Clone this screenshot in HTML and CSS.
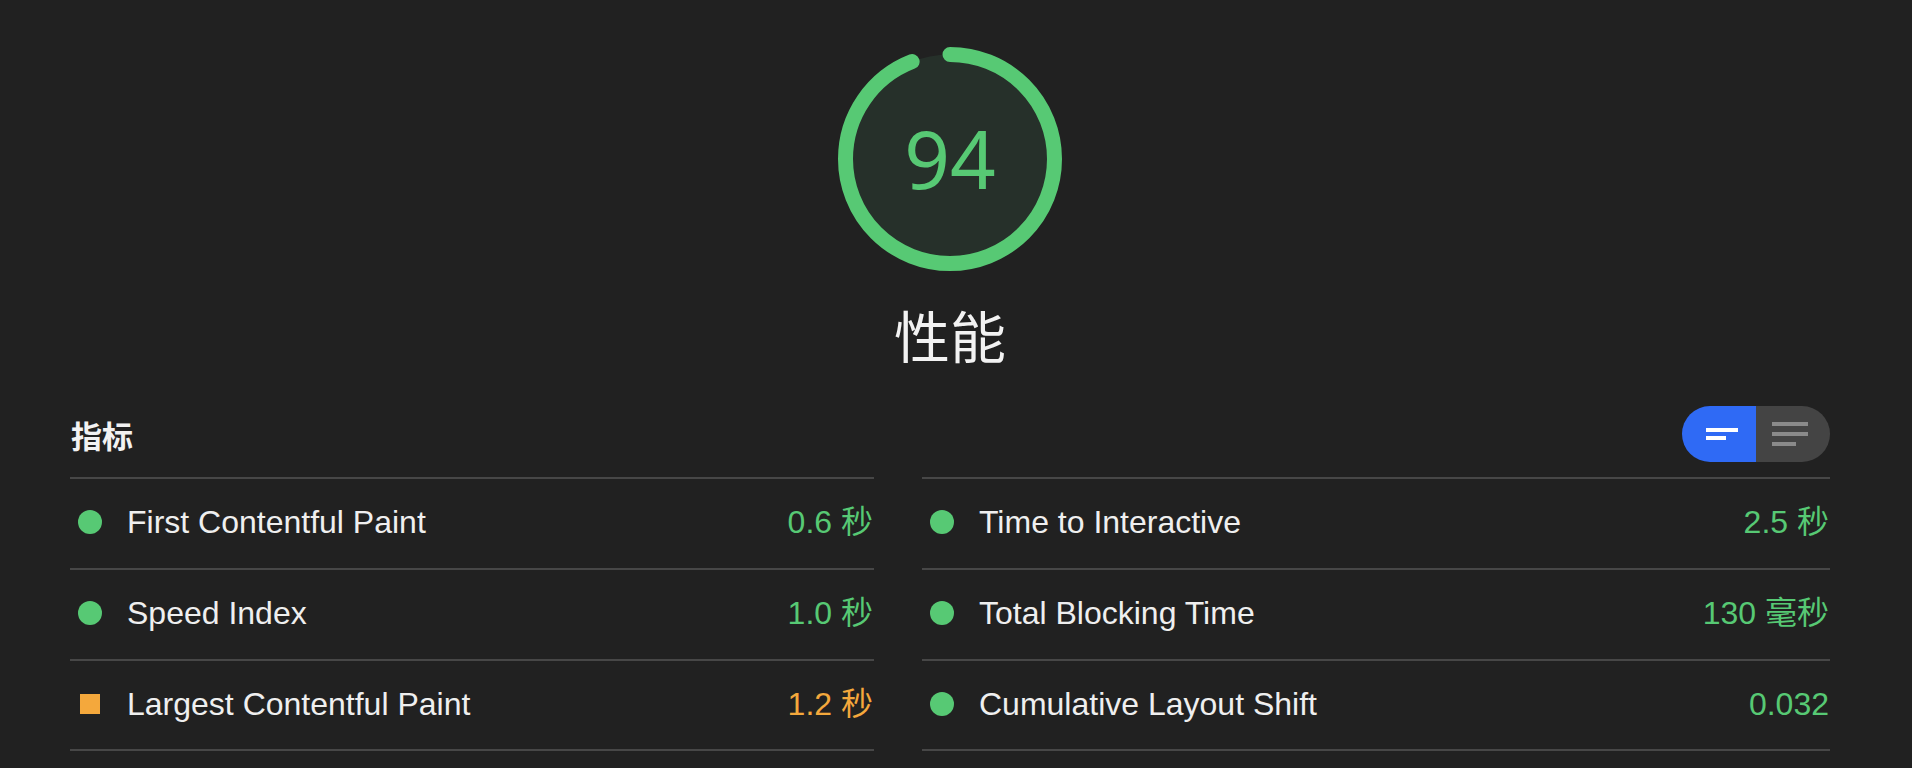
FILE: index.html
```html
<!DOCTYPE html>
<html lang="zh-CN">
<head>
<meta charset="utf-8">
<title>性能</title>
<link rel="stylesheet" href="styles.css">
</head>
<body>
<div class="page">
  <section class="gauge-wrap">
    <div class="gauge">
      <svg class="gauge-svg" width="224" height="224" viewBox="0 0 224 224">
        <circle class="gauge-base" cx="112" cy="112" r="104.5"/>
        <circle class="gauge-arc" cx="112" cy="112" r="104.5" transform="rotate(-90 112 112)" stroke-dasharray="617.2 656.6"/>
      </svg>
      <div class="gauge-score">94</div>
    </div>
    <div class="gauge-label">性能</div>
  </section>

  <section class="metrics">
    <div class="metrics-header">
      <div class="metrics-title">指标</div>
      <div class="toggle">
        <div class="toggle-btn toggle-on">
          <span class="bar bar-w32"></span>
          <span class="bar bar-w20"></span>
        </div>
        <div class="toggle-btn toggle-off">
          <span class="gbar gbar-w36"></span>
          <span class="gbar gbar-w36"></span>
          <span class="gbar gbar-w24"></span>
        </div>
      </div>
    </div>
    <div class="grid">
      <div class="col col-left">
        <div class="metric">
          <span class="icon"><span class="dot pass"></span></span>
          <span class="name">First Contentful Paint</span>
          <span class="value pass-text">0.6 秒</span>
        </div>
        <div class="metric">
          <span class="icon"><span class="dot pass"></span></span>
          <span class="name">Speed Index</span>
          <span class="value pass-text">1.0 秒</span>
        </div>
        <div class="metric">
          <span class="icon"><span class="square avg"></span></span>
          <span class="name">Largest Contentful Paint</span>
          <span class="value avg-text">1.2 秒</span>
        </div>
      </div>
      <div class="col col-right">
        <div class="metric">
          <span class="icon"><span class="dot pass"></span></span>
          <span class="name">Time to Interactive</span>
          <span class="value pass-text">2.5 秒</span>
        </div>
        <div class="metric">
          <span class="icon"><span class="dot pass"></span></span>
          <span class="name">Total Blocking Time</span>
          <span class="value pass-text">130 毫秒</span>
        </div>
        <div class="metric">
          <span class="icon"><span class="dot pass"></span></span>
          <span class="name">Cumulative Layout Shift</span>
          <span class="value pass-text">0.032</span>
        </div>
      </div>
    </div>
  </section>
</div>
</body>
</html>
```

FILE: styles.css
```css
html, body {
  margin: 0;
  padding: 0;
  background: #212121;
}

body {
  font-family: "Liberation Sans", "Noto Sans CJK SC", sans-serif;
  color: #efefef;
  overflow: hidden;
}

.page {
  width: 1760px;
  padding-left: 70px;
}

.gauge-wrap {
  display: flex;
  flex-direction: column;
  align-items: center;
  padding-top: 47px;
}

.gauge {
  display: grid;
  width: 224px;
  height: 224px;
}

.gauge-svg,
.gauge-score {
  grid-area: 1 / 1;
}

.gauge-svg {
  display: block;
}

.gauge-base {
  fill: #26302a;
  stroke: none;
}

.gauge-arc {
  fill: none;
  stroke: #57c974;
  stroke-width: 15;
  stroke-linecap: round;
}

.gauge-score {
  display: flex;
  align-items: center;
  justify-content: center;
  font-family: "Noto Sans", "Open Sans", sans-serif;
  font-size: 80px;
  line-height: 1;
  color: #57c974;
  padding-bottom: 2px;
}

.gauge-label {
  margin-top: 35px;
  font-family: "Noto Sans CJK SC", sans-serif;
  font-size: 56px;
  line-height: 56px;
  color: #f2f2f2;
}

.metrics {
  margin-top: 44px;
}

.metrics-header {
  display: flex;
  align-items: center;
  justify-content: space-between;
  height: 56px;
  margin-bottom: 15px;
}

.metrics-title {
  font-family: "Noto Sans CJK SC", sans-serif;
  font-weight: 700;
  font-size: 31px;
  line-height: 1;
  color: #f2f2f2;
  padding-left: 1px;
}

.toggle {
  display: flex;
  width: 148px;
  height: 56px;
  border-radius: 28px;
  overflow: hidden;
}

.toggle-btn {
  width: 74px;
  height: 56px;
  display: flex;
  flex-direction: column;
  justify-content: center;
  box-sizing: border-box;
}

.toggle-on {
  background: #2f6af5;
  padding-left: 24px;
  gap: 4px;
}

.toggle-off {
  background: #444444;
  padding-left: 16px;
  gap: 6px;
}

.bar {
  display: block;
  height: 4px;
  background: #ffffff;
}

.bar-w32 { width: 32px; }
.bar-w20 { width: 20px; }

.gbar {
  display: block;
  height: 4px;
  background: #8a8a8a;
}

.gbar-w36 { width: 36px; }
.gbar-w24 { width: 24px; }

.grid {
  display: grid;
  grid-template-columns: 804px 908px;
  column-gap: 48px;
}

.col {
  border-bottom: 2px solid #474747;
}

.metric {
  display: flex;
  align-items: center;
  box-sizing: border-box;
  height: 91px;
  padding-bottom: 3px;
  border-top: 2px solid #474747;
  font-size: 32px;
  line-height: 1;
}

.metric:last-child {
  height: 90px;
}

.icon {
  width: 24px;
  margin-left: 8px;
  margin-right: 25px;
  display: flex;
  align-items: center;
  justify-content: center;
}

.dot {
  width: 24px;
  height: 24px;
  border-radius: 50%;
}

.square {
  width: 20px;
  height: 20px;
}

.pass { background: #57c974; }
.avg { background: #f4a83c; }

.name {
  flex: 1;
  color: #efefef;
}

.value {
  padding-right: 1px;
}

.pass-text { color: #57c974; }
.avg-text { color: #f4a83c; }
```
